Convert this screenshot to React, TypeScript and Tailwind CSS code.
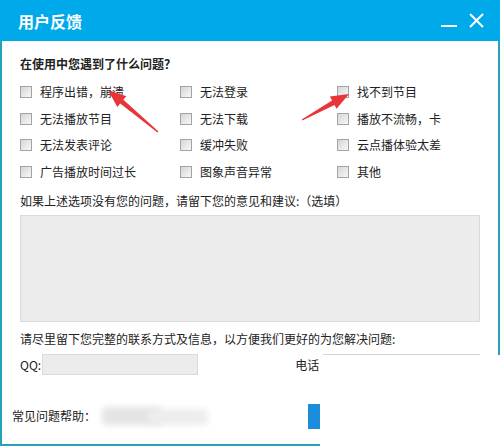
import React from "react";

const font = { fontFamily: '"Noto Sans CJK SC", "Microsoft YaHei", sans-serif' };

const items = [
  "程序出错，崩溃", "无法登录", "找不到节目",
  "无法播放节目", "无法下载", "播放不流畅，卡",
  "无法发表评论", "缓冲失败", "云点播体验太差",
  "广告播放时间过长", "图象声音异常", "其他",
];

function Box() {
  return (
    <span className="w-[12px] h-[12px] shrink-0 border border-[#a3a3a3] bg-gradient-to-br from-[#d6d6d6] to-[#f8f8f8]" />
  );
}

export default function App() {
  return (
    <div className="relative w-[500px] h-[446px] overflow-hidden bg-white text-[#222] text-[12px] leading-[16px]" style={font}>
      {/* title bar */}
      <div className="h-[41px] bg-[#00a9ea] flex items-center pl-[18px] pr-[16px]">
        <span className="text-white font-bold text-[16px] leading-[20px] pt-[1px]">用户反馈</span>
        <div className="ml-auto flex items-center gap-[12px]">
          <span className="w-[16px] h-[2px] bg-white mt-[10px]" />
          <svg width="15" height="15" viewBox="0 0 15 15">
            <path d="M1 1 L14 14 M14 1 L1 14" stroke="white" strokeWidth="2" />
          </svg>
        </div>
      </div>
      {/* body */}
      <div className="h-[405px] border-l-2 border-r-2 border-b-2 border-[#25a2b7] pl-[18px] pr-[18px] pt-[15px]">
        <div className="font-bold">在使用中您遇到了什么问题？</div>
        <div className="grid grid-cols-[160px_157px_1fr] mt-[7px]">
          {items.map((t) => (
            <div key={t} className="h-[26.6px] flex items-center gap-[8px]">
              <Box />
              <span>{t}</span>
            </div>
          ))}
        </div>
        <div className="mt-[8px]">如果上述选项没有您的问题，请留下您的意见和建议:（选填）</div>
        <div className="mt-[6px] h-[107px] bg-[#ececec] border border-[#dadada]" />
        <div className="mt-[9px]">请尽里留下您完整的联系方式及信息，以方便我们更好的为您解决问题:</div>
        <div className="mt-[7px] flex items-center h-[21px]">
          <span>QQ:</span>
          <div className="ml-[1px] w-[156px] h-[21px] bg-[#ececec] border border-[#dadada]" />
          <span className="ml-[97px]">电话</span>
        </div>
        <div className="mt-[28px] -ml-[8px] flex items-center h-[26px]">
          <span>常见问题帮助：</span>
          <div className="ml-[2px] w-[112px] h-[24px] relative">
            <div className="absolute left-[4px] top-[3px] w-[60px] h-[18px] bg-[#e4e4e4] blur-[3px] rounded" />
            <div className="absolute left-[50px] top-[5px] w-[60px] h-[16px] bg-[#ededed] blur-[3px] rounded" />
          </div>
          <div className="ml-[98px] w-[12px] h-[25px] bg-[#1a8ddd]" />
        </div>
      </div>
      {/* occluding white area bottom right */}
      <div className="absolute left-[320px] top-[355px] w-[180px] h-[91px] bg-white" />
      <div className="absolute left-[323px] top-[354px] w-[157px] h-[1px] bg-[#d4d4d4]" />
      {/* arrows */}
      <svg className="absolute left-0 top-0" width="500" height="446">
        <polygon
          fill="#e8353a"
          points="108,90 126.3,96.2 123.4,99.7 158.5,131.5 157.5,132.5 120.2,103.5 117.3,107.0"
        />
        <polygon
          fill="#e8353a"
          points="349,94 336.6,108.8 334.5,104.9 302.3,120.6 301.7,119.4 332.0,100.5 329.9,96.6"
        />
      </svg>
    </div>
  );
}
